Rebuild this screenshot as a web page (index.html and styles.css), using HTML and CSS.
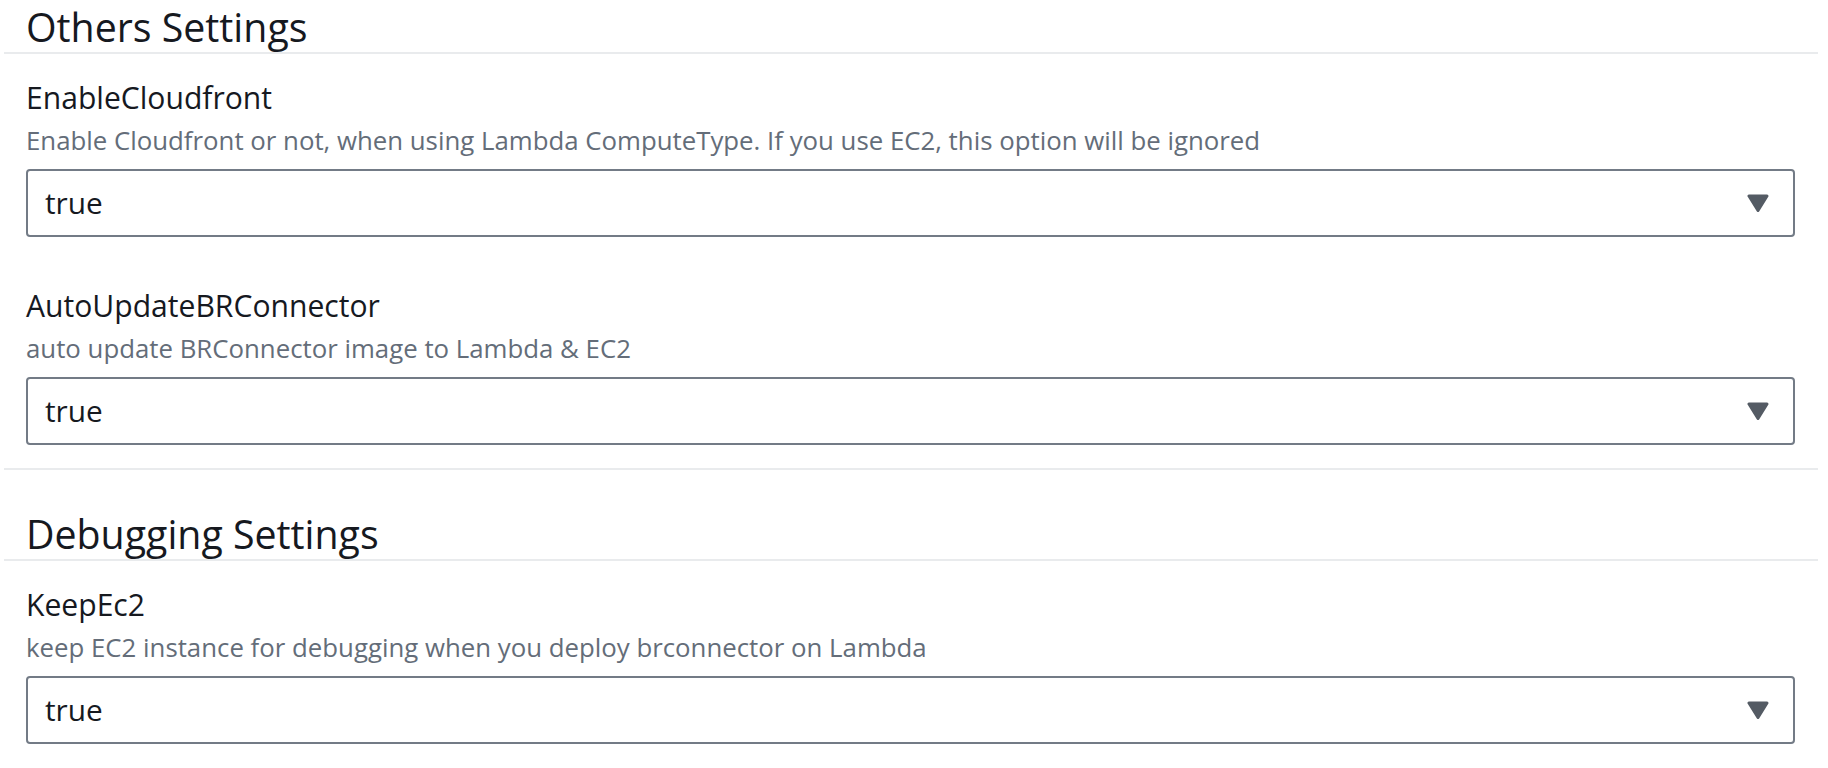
FILE: index.html
```html
<!DOCTYPE html>
<html lang="en">
<head>
<meta charset="utf-8">
<title>Parameters</title>
<link rel="stylesheet" href="styles.css">
</head>
<body>
<main class="page">
  <section class="group group-first">
    <h2 class="group-title">Others Settings</h2>
    <div class="fields">
      <div class="field">
        <div class="field-label">EnableCloudfront</div>
        <div class="field-desc">Enable Cloudfront or not, when using Lambda ComputeType. If you use EC2, this option will be ignored</div>
        <div class="select">
          <span class="select-value">true</span>
          <svg class="caret" width="22" height="18" viewBox="0 0 22 18" aria-hidden="true"><path d="M2 2 H20 L11 16.5 Z"/></svg>
        </div>
      </div>
      <div class="field">
        <div class="field-label">AutoUpdateBRConnector</div>
        <div class="field-desc">auto update BRConnector image to Lambda &amp; EC2</div>
        <div class="select">
          <span class="select-value">true</span>
          <svg class="caret" width="22" height="18" viewBox="0 0 22 18" aria-hidden="true"><path d="M2 2 H20 L11 16.5 Z"/></svg>
        </div>
      </div>
    </div>
  </section>
  <section class="group group-next">
    <h2 class="group-title">Debugging Settings</h2>
    <div class="fields">
      <div class="field">
        <div class="field-label">KeepEc2</div>
        <div class="field-desc">keep EC2 instance for debugging when you deploy brconnector on Lambda</div>
        <div class="select">
          <span class="select-value">true</span>
          <svg class="caret" width="22" height="18" viewBox="0 0 22 18" aria-hidden="true"><path d="M2 2 H20 L11 16.5 Z"/></svg>
        </div>
      </div>
    </div>
  </section>
</main>
</body>
</html>
```

FILE: styles.css
```css
html, body {
  margin: 0;
  padding: 0;
  background: #ffffff;
}

body {
  font-family: "Open Sans", "Noto Sans", "Liberation Sans", sans-serif;
  color: #16191f;
}

.page {
  padding: 0 10px 0 4px;
}

.group-first {
  border-bottom: 2px solid #e9ebed;
}

.group-next {
  padding-top: 37px;
}

.group-title {
  margin: 0;
  padding: 3px 23px 1px 22px;
  font-size: 39.3px;
  line-height: 48px;
  font-weight: 400;
  color: #16191f;
  border-bottom: 2px solid #e9ebed;
}

.fields {
  display: flex;
  flex-direction: column;
  gap: 45px;
  padding: 20px 23px 23px 22px;
}

.field {
  display: flex;
  flex-direction: column;
}

.field-label {
  font-size: 30.1px;
  line-height: 48px;
  color: #16191f;
}

.field-desc {
  font-size: 25.8px;
  line-height: 36px;
  color: #646d79;
}

.select {
  margin-top: 11px;
  height: 68px;
  box-sizing: border-box;
  border: 2px solid #737b86;
  border-radius: 4px;
  background: #ffffff;
  display: flex;
  align-items: center;
  justify-content: space-between;
  padding: 0 24px 0 17px;
}

.select-value {
  font-size: 29.8px;
  line-height: 40px;
  color: #16191f;
}

.caret {
  display: block;
}

.caret path {
  fill: #545b64;
  stroke: #545b64;
  stroke-width: 3;
  stroke-linejoin: round;
}
```
